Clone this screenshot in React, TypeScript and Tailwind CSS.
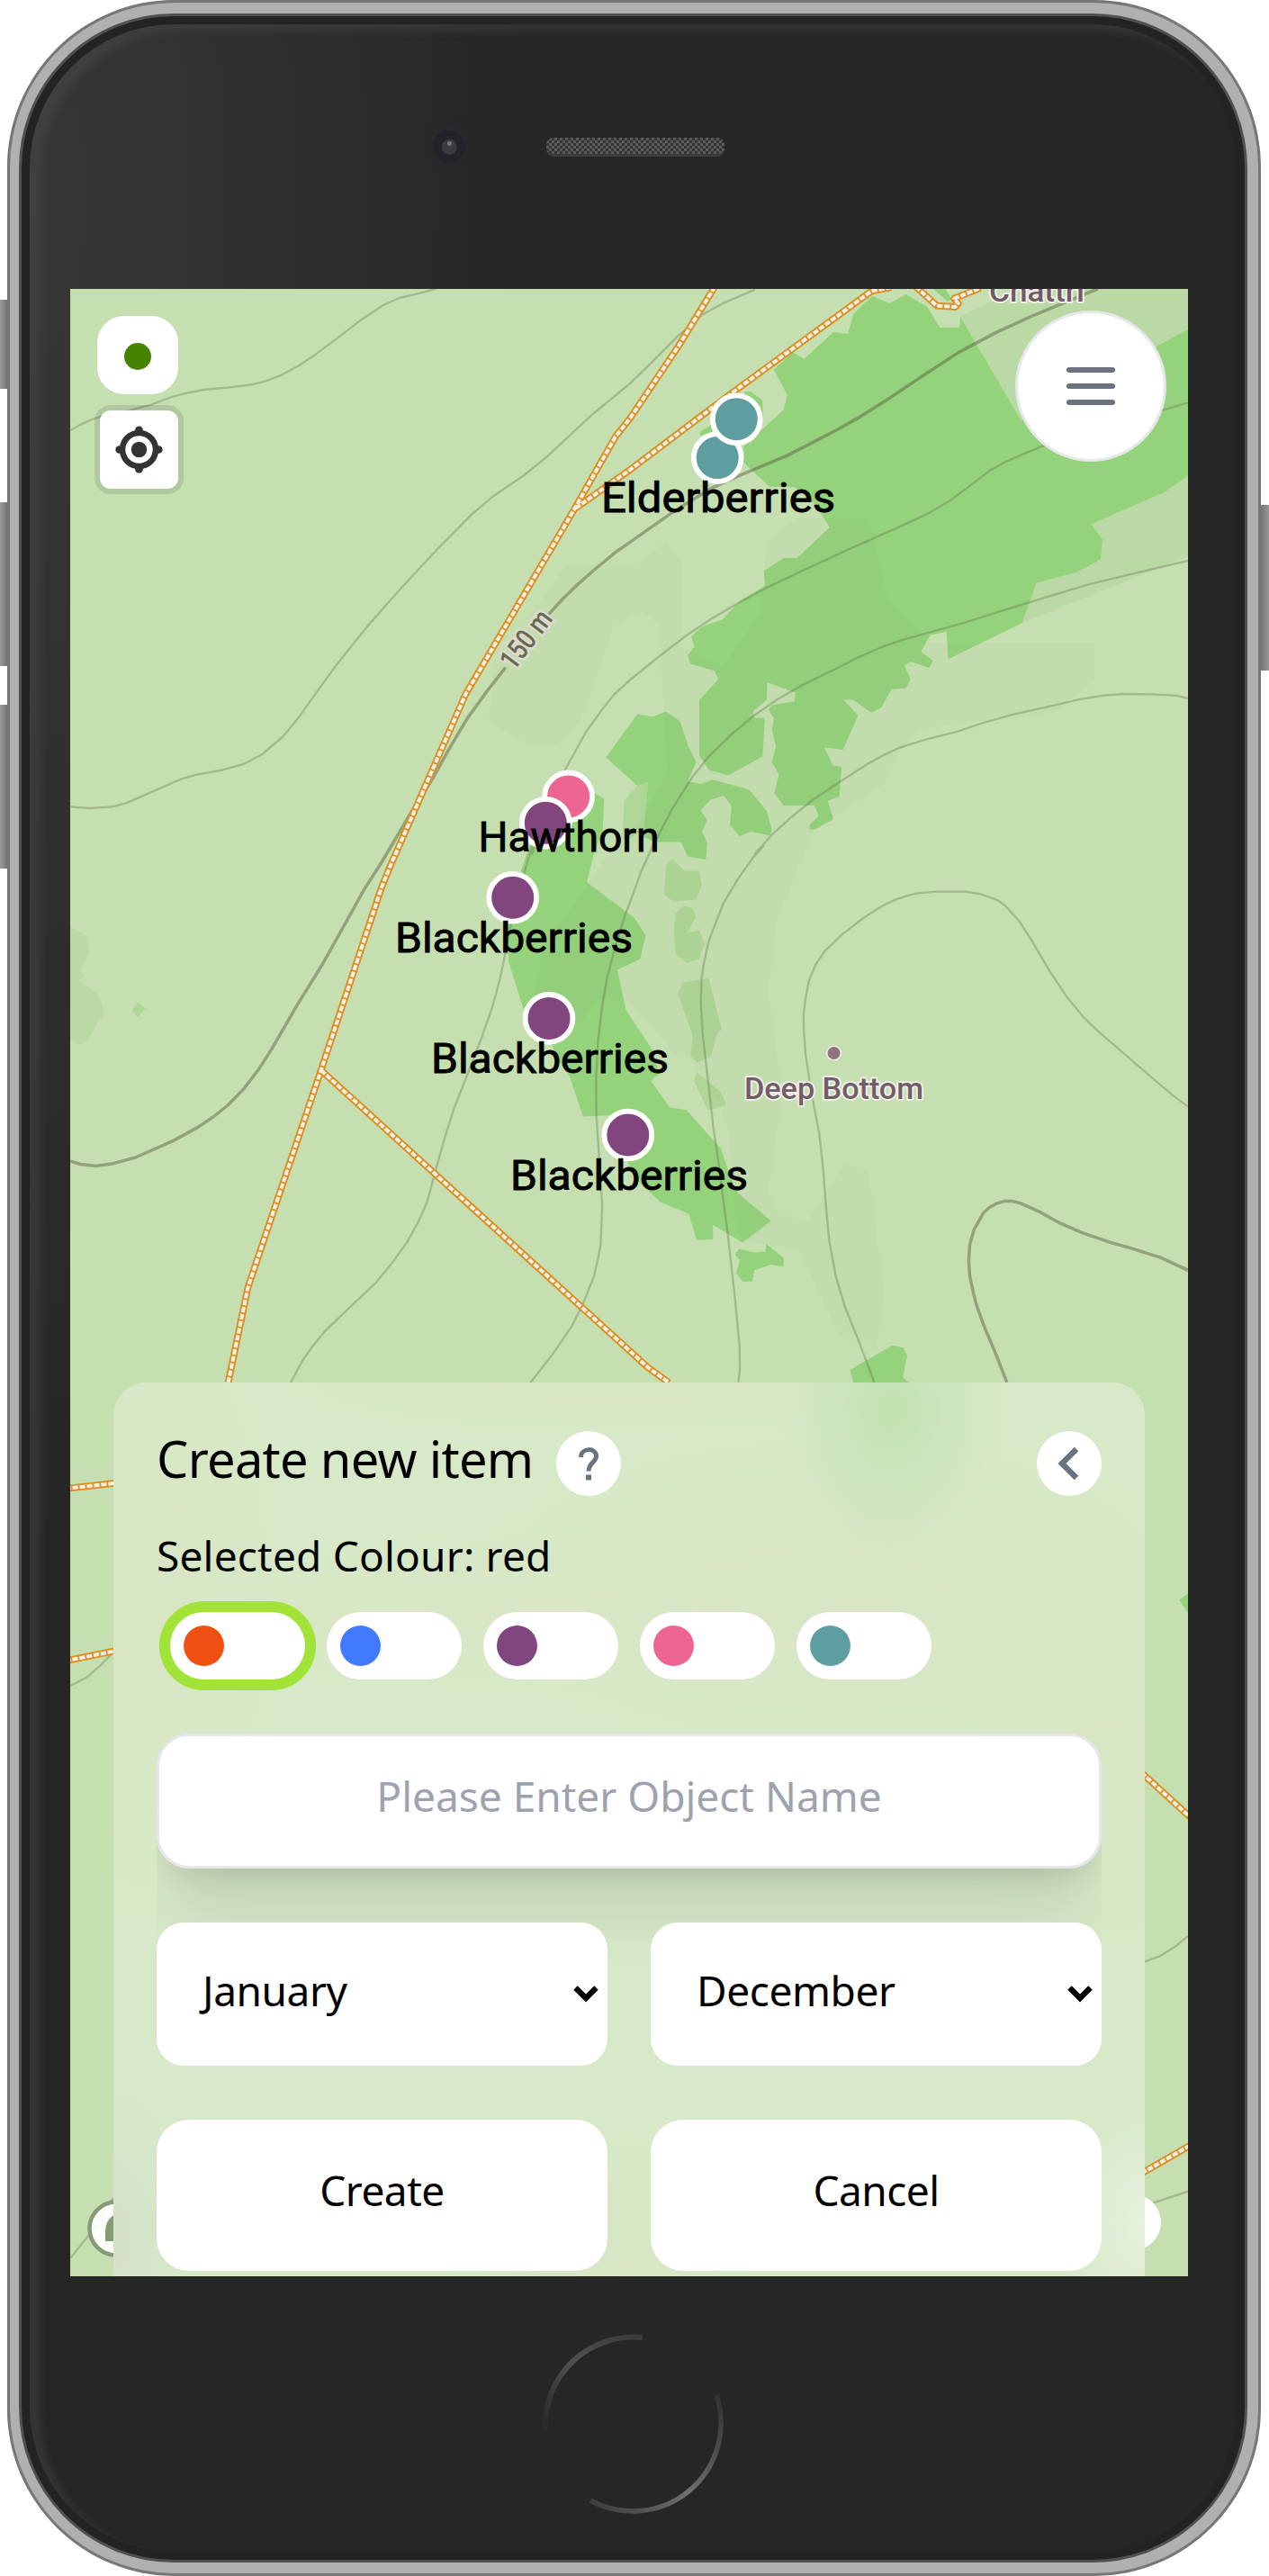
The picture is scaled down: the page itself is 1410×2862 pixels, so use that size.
import React from "react";

type Tile = [number, number, number, number];

/* Survey sheets: origin x, origin y, units per pixel across, units per pixel down */
const B: Tile = [705, 0, 2.224, 3];
const C: Tile = [60, 320, 2.3758, 2.45];
const D: Tile = [700, 320, 2.3758, 2.45];
const E: Tile = [60, 940, 2.3758, 2.529];
const F: Tile = [700, 940, 2.3758, 2.529];
const G: Tile = [60, 1530, 2.3758, 2.8];
const H: Tile = [700, 1530, 2.3758, 2.8];
const I: Tile = [60, 2080, 2.3758, 3];
const J: Tile = [700, 2080, 2.208, 3];

type Part = [Tile, string];

const pts = (...parts: Part[]) =>
  parts
    .map(([t, s]) =>
      s
        .trim()
        .split(/\s+/)
        .map((q) => {
          const [x, y] = q.split(",").map(Number);
          return `${(t[0] + x / t[2]).toFixed(1)},${(t[1] + y / t[3]).toFixed(1)}`;
        })
        .join(" ")
    )
    .join(" ");

const faint = [
  pts(
    [C, "1350,755 1540,755 1568,740"],
    [D, "0,755 15,755 97,690 137,752 138,985 245,1028 345,885 362,690 440,628 630,628 680,845 790,965 1225,965 1225,1070 1120,1155 760,1200 715,1255 670,1350 485,1475 448,1568"],
    [F, "385,215 365,410 402,700 365,970 385,1025 465,1063 520,965 568,893 630,915 670,1255 650,1413 550,1370 445,1130 300,1110 280,1080 260,800 230,710 165,600 120,585 0,440"],
    [E, "1515,433 1430,433 1390,500 1265,440 1290,290 1465,20"],
    [D, "0,1500 98,1320 78,920 35,880 0,895"],
    [C, "1475,925 1390,1180 1330,1242 1250,1242 1147,1180 1165,1030"]
  ),
];

const scrub = [
  pts([D, "872,78 950,38 1050,2 1473,2 1473,113 1388,160 1033,362"]),
  pts([D, "1473,510 1412,555 1217,643 1247,683 1243,738 1180,773 1073,803 1035,912 1473,730"]),
  pts([E, "43,228 88,253 93,303 70,345 77,367 63,378 115,413 133,467 85,550 65,558 43,543"]),
];

const grove = [
  pts([F, "95,55 113,38 145,70 183,70 189,110 175,150 115,157 90,137"]),
  pts([F, "120,190 142,168 165,173 175,197 152,243 183,237 197,275 182,318 150,328 120,303 116,240"]),
  pts([F, "140,383 208,372 242,515 230,528 214,590 178,608 160,590 165,530 126,415"]),
  pts([F, "177,635 240,692 254,727 206,743 168,658"]),
  pts([E, "205,462 222,439 241,456 221,481"]),
  pts([C, "1540,1355 1505,1395 1500,1500"], [D, "0,1500 38,1470 48,1345"]),
  pts([D, "95,1568 112,1556 125,1568"]),
];

const wood = [
  pts([
    D,
    "590,70 640,22 686,42 728,17 785,52 818,108 870,108 872,78 1033,362 1388,160 1473,113 1473,510 1412,555 1217,643 1247,683 1243,738 1180,773 1073,803 1035,912 840,1010 836,936 792,945 768,990 800,1014 789,1034 740,1017 724,1028 741,1064 729,1089 690,1093 664,1141 637,1156 588,1121 564,1121 602,1164 562,1257 513,1250 536,1300 558,1303 553,1384 522,1396 537,1446 486,1475 473,1473 475,1460 498,1437 487,1408 405,1409 381,1374 393,1324 375,1290 385,1247 375,1203 380,1170 365,1148 376,1135 434,1125 437,1102 362,1073 361,1121 325,1152 328,1170 356,1171 350,1275 260,1326 208,1312 183,1272 183,1121 233,1065 223,1042 160,1023 152,1001 170,976 162,948 190,922 243,903 293,850 357,810 353,770 405,735 441,735 527,652 490,590 435,542 368,541 300,475 300,430 405,332 415,291 380,222 430,175 460,193 537,120 575,125",
  ]),
  pts([D, "303,282 320,283 349,305 352,350 285,360"]),
  pts([D, "185,390 220,370 230,400 185,402"]),
  pts([D, "800,2 833,2 848,30 838,36"]),
  pts(
    [C, "1457,1278 1540,1160 1568,1165"],
    [D, "20,1160 60,1167 95,1153 132,1180 155,1250 175,1290 152,1343 190,1350 217,1338 315,1366 360,1422 375,1475 368,1490 320,1480 288,1492 264,1460 268,1410 248,1382 213,1393 186,1422 204,1448 190,1480 204,1510 200,1556 152,1547 135,1508 72,1508 35,1495 48,1345 20,1355 0,1340"],
    [C, "1540,1355"]
  ),
  pts(
    [C, "1405,1370 1428,1376 1452,1390 1448,1480"],
    [E, "1425,20 1407,102 1530,200 1562,250 1547,318 1487,348 1510,460 1568,560"],
    [F, "0,475 60,575 78,640 55,660 105,735 148,741 240,850 265,930 285,975 372,1053 297,1114 219,1065 219,1105 176,1107 155,1033 80,1000 0,920"],
    [E, "1540,935 1515,890 1500,755 1397,760 1362,650 1330,600 1315,560 1240,460 1200,325 1195,200 1230,80 1255,0"],
    [C, "1300,1400"]
  ),
  pts([F, "277,1148 287,1132 330,1142 357,1140 360,1118 405,1157 406,1181 372,1176 328,1192 323,1223 298,1224 280,1200 290,1163"]),
  pts([F, "581,1472 693,1402 722,1410 732,1432 720,1492 735,1507 590,1507"]),
  pts([H, "1450,693 1473,673 1473,732"]),
];

const minor = [
  pts([C, "43,387 70,372 95,360 122,350 200,333 255,318 310,297 350,286 398,276 460,271 523,263 562,252 602,236 645,212 690,181 750,135 810,87 870,46 912,27 945,19 1010,2"]),
  pts([D, "330,4 245,42 190,73 120,137 50,210 0,260"], [C, "1525,256 1420,345 1300,460 1240,510 1158,568 1103,616 1010,713 920,813 827,921 744,1028 690,1105 645,1170 605,1220 550,1269 500,1296 440,1313 375,1325 337,1336 270,1366 193,1401 153,1412 95,1416 43,1412"]),
  pts(
    [D, "1473,312 1405,333 1090,430 1040,451 990,474 950,497 895,540 845,579 790,612 720,646 580,710 460,767 360,816 290,855 220,897 150,945 80,1000 0,1067"],
    [C, "1480,1105 1445,1150 1405,1207 1375,1263 1350,1310 1300,1430 1262,1540"],
    [E, "1262,0 1240,80 1210,200 1192,300 1178,370 1158,450 1130,535 1090,645 1055,740 1030,825 1005,920 985,1000 962,1055 932,1113 890,1175 850,1226 790,1287 718,1360 685,1402 655,1447 625,1507"]
  ),
  pts(
    [D, "1473,742 1350,772 1210,807 1040,860 880,912 715,959 665,977 605,1004 540,1038 455,1081 390,1119 330,1162 270,1213 210,1273 165,1330 110,1420 65,1510"],
    [F, "60,0 30,70 0,158"],
    [E, "1507,195 1480,290 1460,370 1447,450 1437,540 1431,650 1432,760 1438,860 1447,1010 1443,1120 1437,1155 1425,1210 1395,1290 1365,1352 1315,1430 1258,1507"]
  ),
  pts(
    [D, "1473,1117 1440,1109 1375,1106 1300,1105 1250,1109 1190,1119 1120,1136 1010,1161 930,1184 865,1207 770,1232 710,1252 670,1271 625,1297 555,1343 480,1395 425,1441 375,1488 330,1540"],
    [F, "352,0 325,32 285,92 247,160 230,205 207,270 194,335 189,370 187,440 192,530 205,650 220,790 235,900 258,1090 275,1250 289,1400 290,1470 286,1507"]
  ),
  pts([F, "1473,732 1435,702 1390,662 1230,515 1200,484 1152,422 1110,355 1060,265 1028,212 990,167 970,152 930,136 885,128 810,128 762,132 740,137 700,151 663,170 620,199 560,248 515,294 490,333 472,380 463,430 458,475 459,520 464,590 480,700 500,810 510,910 518,1020 526,1110 543,1208 567,1294 600,1380 645,1507"]),
  pts([G, "43,960 85,935 120,900 157,855"]),
  pts([J, "1263,298 1300,280 1340,246 1369,213"]),
  pts([J, "1263,1112 1283,1103 1369,1064"]),
  pts([I, "43,1287 95,1205 157,1085"]),
];

const major = [
  pts([D, "1235,2 1060,77 970,119 868,175 780,234 680,303 600,355 550,384 415,456 290,510 215,545 120,605 0,692"], [C, "1485,717 1425,768 1377,812 1343,846 1305,889"]),
  pts([C, "1192,1033 1145,1095 1092,1170 1040,1260 1000,1335 940,1432 862,1568"], [E, "820,120 710,330 640,450 575,570 540,628 500,683 460,727 422,760 380,790 315,828 215,875 152,893 112,899 70,894 43,885"]),
  pts([F, "1473,1192 1400,1156 1320,1129 1275,1116 1197,1088 1132,1058 1080,1027 1030,1003 1010,998 988,998 968,1004 948,1016 932,1032 908,1078 897,1120 894,1165 897,1210 907,1258 915,1290 935,1350 968,1433 995,1507"]),
];

const roads = [
  pts([D, "224,-4 130,155 0,355"], [C, "1482,405 1372,605 1087,1105 890,1568"], [E, "865,115 705,630 512,1240 460,1507"]),
  pts([D, "690,-2 638,8 270,285 0,495"], [C, "1372,603"]),
  pts([E, "705,630 1568,1465"], [F, "103,1508"]),
  pts([H, "1350,1230 1485,1376"]),
  pts([B, "695,955 747,1019 793,1023 800,1012 790,995 855,960"]),
  pts([G, "30,347 160,330"]),
  pts([G, "30,883 160,852"]),
  pts([J, "1255,1004 1385,902"]),
];

const pins = [
  { x: 797.2, y: 508.6, c: "#5f9ea0" },
  { x: 818.3, y: 465.7, c: "#5f9ea0" },
  { x: 631.6, y: 884.9, c: "#ec6691" },
  { x: 606.3, y: 914.3, c: "#82467f" },
  { x: 569.7, y: 997.3, c: "#82467f" },
  { x: 610, y: 1131.4, c: "#82467f" },
  { x: 697.8, y: 1261, c: "#82467f" },
];

const labels = [
  { t: "Elderberries", x: 668, y: 568.5, w: 260 },
  { t: "Hawthorn", x: 531.5, y: 945.5, w: 201 },
  { t: "Blackberries", x: 439, y: 1057.5, w: 264 },
  { t: "Blackberries", x: 479, y: 1192, w: 264 },
  { t: "Blackberries", x: 567, y: 1321.5, w: 264 },
];

function MapCanvas() {
  return (
    <svg className="absolute inset-0 h-full w-full font-[Roboto,sans-serif]" viewBox="78 321 1242 2208">
      <rect x="78" y="321" width="1242" height="2208" fill="#c5dfb0" />
      {scrub.map((p, i) => <polygon key={i} points={p} fill="#bad9a5" />)}
      {grove.map((p, i) => <polygon key={i} points={p} fill="#afd696" />)}
      {wood.map((p, i) => <polygon key={i} points={p} fill="#95d27c" />)}
      {faint.map((p, i) => <polygon key={i} points={p} fill="#405020" fillOpacity="0.021" />)}
      <g fill="none" strokeLinejoin="round" stroke="#5b6142">
        {minor.map((p, i) => <polyline key={i} points={p} strokeWidth="2.4" strokeOpacity="0.3" />)}
        {major.map((p, i) => <polyline key={i} points={p} strokeWidth="3.5" strokeOpacity="0.48" />)}
      </g>
      <g fill="none" strokeLinejoin="round">
        {roads.map((p, i) => <polyline key={i} points={p} stroke="#dd8f20" strokeWidth="7.8" />)}
        {roads.map((p, i) => <polyline key={i} points={p} stroke="#f3efe9" strokeWidth="4" strokeDasharray="6.2 1.8" />)}
      </g>
      <g fontSize="34" strokeLinejoin="round" paintOrder="stroke">
        <text x="1099" y="335" textLength="106" lengthAdjust="spacingAndGlyphs" fill="#705a66" stroke="#f0f0e9" strokeWidth="4" fontWeight="500">Chattri</text>
        <circle cx="926.5" cy="1170" r="7" fill="#8f7480" stroke="#eef0e6" strokeWidth="3" />
        <text x="827" y="1220.5" textLength="199" lengthAdjust="spacingAndGlyphs" fill="#725c68" stroke="#eef0e6" strokeWidth="4" fontWeight="500">Deep Bottom</text>
        <text transform="translate(571 746) rotate(-53)" textLength="73" lengthAdjust="spacingAndGlyphs" fontSize="32" fontWeight="500" fill="#666a50" stroke="#dcdacf" strokeWidth="6">150 m</text>
      </g>
      {pins.map((p, i) => <circle key={i} cx={p.x} cy={p.y} r="26.4" fill={p.c} stroke="#fff" strokeWidth="5.8" />)}
      <g fontSize="46.5" fill="#000" stroke="#000" strokeWidth="0.9">
        {labels.map((l, i) => (
          <text key={i} x={l.x} y={l.y} textLength={l.w} lengthAdjust="spacingAndGlyphs">{l.t}</text>
        ))}
      </g>
      <circle cx="129" cy="2476" r="29.5" fill="#fff" fillOpacity="0.92" stroke="#879a78" strokeWidth="4.5" />
      <path d="M117 2490 V2480 C117 2469 122 2462 131 2459 V2490 Z" fill="#879a78" />
      <circle cx="1259" cy="2469" r="31" fill="#fff" />
    </svg>
  );
}

const swatches = ["bg-[#f05012]", "bg-[#417aff]", "bg-[#82467f]", "bg-[#ec6691]", "bg-[#5f9ea0]"];

function Swatch({ color, active }: { color: string; active: boolean }) {
  return (
    <button className={"flex h-[75px] w-[150px] items-center rounded-full bg-white pl-[15px] " + (active ? "ring-12 ring-[#a1e336]" : "")}>
      <span className={"size-[45px] rounded-full " + color} />
    </button>
  );
}

function MonthSelect({ value }: { value: string }) {
  return (
    <button className="flex h-[159px] flex-1 items-center justify-between rounded-[30px] bg-white pr-[9px] pl-[51px]">
      <span className="-mt-[8px]">{value}</span>
      <svg width="30" height="20" viewBox="0 0 30 20" fill="none" className="-mt-[1px]">
        <path d="M3.5 3.5 L15 15 L26.5 3.5" stroke="#000" strokeWidth="6.2" />
      </svg>
    </button>
  );
}

/* Frosted glass: soft patches of woodland, paths and contours under a pale green */
const frost =
  "bg-[#d7e9c8] bg-[radial-gradient(ellipse_125px_165px_at_864px_30px,#c1e2b1,rgba(193,226,177,0.45)_50%,transparent),radial-gradient(ellipse_90px_130px_at_1146px_932px,#e8f0df,transparent),radial-gradient(ellipse_90px_170px_at_0px_950px,#d5e1ca,transparent),radial-gradient(ellipse_380px_60px_at_560px_0px,#d9e5c4,transparent),radial-gradient(ellipse_420px_190px_at_800px_230px,#d8e5c5,transparent),radial-gradient(ellipse_520px_90px_at_460px_255px,#d8e6c5,transparent),radial-gradient(ellipse_160px_360px_at_30px_240px,#d9e5c4,transparent),radial-gradient(ellipse_200px_200px_at_1110px_430px,#d8e5c5,transparent),radial-gradient(ellipse_200px_130px_at_540px_960px,#d8e5c5,transparent)]";

function CreatePanel() {
  return (
    <section className={"mx-12 h-[993px] rounded-t-[36px] px-12 pt-[54px] " + frost}>
      <div className="flex h-[72px] items-center">
        <h1 className="-mt-[13px] text-[56px] leading-none tracking-[-0.7px] whitespace-nowrap">Create new item</h1>
        <button className="ml-[25px] flex size-[72px] shrink-0 items-center justify-center rounded-full bg-white">
          <svg width="24" height="38" viewBox="0 0 24 38" fill="none" stroke="#6b7280" strokeWidth="5">
            <path d="M3.5 12 C3.5 1 20.5 1 20.5 11 C20.5 18 12 17.5 12 27.5" />
            <path d="M9 34.5 H15" strokeWidth="6" />
          </svg>
        </button>
        <button className="ml-auto flex size-[72px] shrink-0 items-center justify-center rounded-full bg-white">
          <svg width="24" height="38" viewBox="0 0 24 38" fill="none" className="mr-[3px]">
            <path d="M21 3 L5 19 L21 35" stroke="#6b7280" strokeWidth="6.4" />
          </svg>
        </button>
      </div>
      <p className="mt-[33px] h-[68px] text-[46px] leading-[66px] tracking-[0.2px]">Selected Colour: red</p>
      <div className="overflow-hidden pt-[28px]">
        <div className="flex gap-6 pl-[15px]">
          {swatches.map((c, i) => <Swatch key={c} color={c} active={i === 0} />)}
        </div>
        <div className="mt-[60px] flex h-[150px] items-center justify-center rounded-[36px] border-3 border-gray-200 bg-white shadow-[0_60px_75px_-15px_rgba(0,0,0,0.1),0_24px_30px_-18px_rgba(0,0,0,0.1)]">
          <span className="-mt-[11px] text-[46px] text-[#9ca3af]">Please Enter Object Name</span>
        </div>
        <div className="mt-[60px] flex gap-12 text-[46px] tracking-[-0.4px]">
          <MonthSelect value="January" />
          <MonthSelect value="December" />
        </div>
        <div className="mt-[60px] flex gap-12 text-[46px] tracking-[-0.5px]">
          <button className="h-[168px] flex-1 rounded-[36px] bg-white pb-[11px]">Create</button>
          <button className="h-[168px] flex-1 rounded-[36px] bg-white pb-[11px]">Cancel</button>
        </div>
      </div>
    </section>
  );
}

function Screen() {
  return (
    <div className="relative h-[2208px] w-[1242px] overflow-hidden bg-[#c5dfb0] font-['Noto_Sans',sans-serif] text-black">
      <MapCanvas />
      <div className="relative flex h-full flex-col justify-between">
        <div className="flex items-start justify-between pt-6 pr-6 pl-[30px]">
          <div className="mt-[6px] flex flex-col gap-[18px]">
            <div className="flex h-[87px] w-[90px] items-center justify-center rounded-[30px] bg-white">
              <span className="mt-[3px] size-[30px] rounded-full bg-[#468300]" />
            </div>
            <button className="ml-[3px] flex size-[87px] items-center justify-center rounded-[12px] bg-white shadow-[0_0_0_6px_rgba(0,0,0,0.1)]">
              <svg width="87" height="87" viewBox="0 0 20 20" fill="#333">
                <path d="M10 4C9 4 9 5 9 5v.1A5 5 0 0 0 5.1 9H5s-1 0-1 1 1 1 1 1h.1A5 5 0 0 0 9 14.9v.1s0 1 1 1 1-1 1-1v-.1a5 5 0 0 0 3.9-3.9h.1s1 0 1-1-1-1-1-1h-.1A5 5 0 0 0 11 5.1V5s0-1-1-1zm0 2.5a3.5 3.5 0 1 1 0 7 3.5 3.5 0 1 1 0-7z" />
                <circle cx="10" cy="10" r="2" />
              </svg>
            </button>
          </div>
          <button className="flex size-[168px] flex-col items-center justify-center gap-3 rounded-full border-3 border-gray-200 bg-white">
            <span className="h-[6px] w-[54px] rounded-full bg-[#6b7280]" />
            <span className="h-[6px] w-[54px] rounded-full bg-[#6b7280]" />
            <span className="h-[6px] w-[54px] rounded-full bg-[#6b7280]" />
          </button>
        </div>
        <CreatePanel />
      </div>
    </div>
  );
}

const sideButton = "absolute left-0 w-[9px] bg-linear-to-r from-[#9a9a9a] via-[#868686] to-[#6c6c6c]";

export default function App() {
  return (
    <main className="relative h-[2862px] w-[1410px] overflow-hidden bg-white">
      <span className={sideButton + " top-[333px] h-[99px]"} />
      <span className={sideButton + " top-[558px] h-[182px]"} />
      <span className={sideButton + " top-[783px] h-[182px]"} />
      <span className="absolute top-[561px] right-0 h-[184px] w-[12px] bg-linear-to-r from-[#6c6c6c] to-[#979797]" />
      <div className="relative ml-[8px] h-[2862px] w-[1393px] rounded-[186px] bg-[#b0b0b0] pt-[15px] pr-[15px] pl-[13px] shadow-[inset_0_0_0_3px_#777777]">
        <div className="relative h-[2832px] rounded-[172px] border-3 border-[#505050] bg-[#262626] bg-[radial-gradient(ellipse_560px_1500px_at_0_200px,#383838,#2f2f2f_50%,#262626)] shadow-[inset_0_0_0_9px_#232323,inset_12px_8px_8px_9px_rgba(80,80,80,0.38)]">
          <div className="flex h-[303px] items-start pt-[127px] pl-[457px]">
            <span className="flex size-[36px] items-center justify-center rounded-full bg-[#232229] shadow-[0_-5px_8px_#2b2a31]">
              <span className="flex size-[17px] justify-center rounded-full bg-[#3c3b42]">
                <span className="mt-[2px] size-[5px] rounded-full bg-[#77767c]" />
              </span>
            </span>
            <span className="mt-[8px] ml-[90px] h-[21px] w-[198px] rounded-[8px] border-b-3 border-[#3d3d3d] bg-[#3e3e3e] bg-[repeating-conic-gradient(#5a5a5a_0_25%,#353535_0_50%)] bg-[length:6px_6px]" />
          </div>
          <div className="ml-[54px]">
            <Screen />
          </div>
          <div className="flex justify-center pt-[62px]">
            <svg width="204" height="204" viewBox="0 0 204 204" fill="none">
              <defs>
                <linearGradient id="ringA" x1="0" y1="1" x2="1" y2="0">
                  <stop offset="0.05" stopColor="#2a2a2a" />
                  <stop offset="0.5" stopColor="#505050" />
                  <stop offset="1" stopColor="#3a3a3a" />
                </linearGradient>
                <linearGradient id="ringB" x1="0" y1="1" x2="1" y2="0">
                  <stop offset="0" stopColor="#3a3a3a" />
                  <stop offset="0.45" stopColor="#707070" />
                  <stop offset="1" stopColor="#303030" />
                </linearGradient>
              </defs>
              <path d="M4 108 A98 98 0 0 1 112 6" stroke="url(#ringA)" strokeWidth="6" />
              <path d="M194 70 A98 98 0 0 1 54 187" stroke="url(#ringB)" strokeWidth="5.5" />
            </svg>
          </div>
        </div>
      </div>
    </main>
  );
}
